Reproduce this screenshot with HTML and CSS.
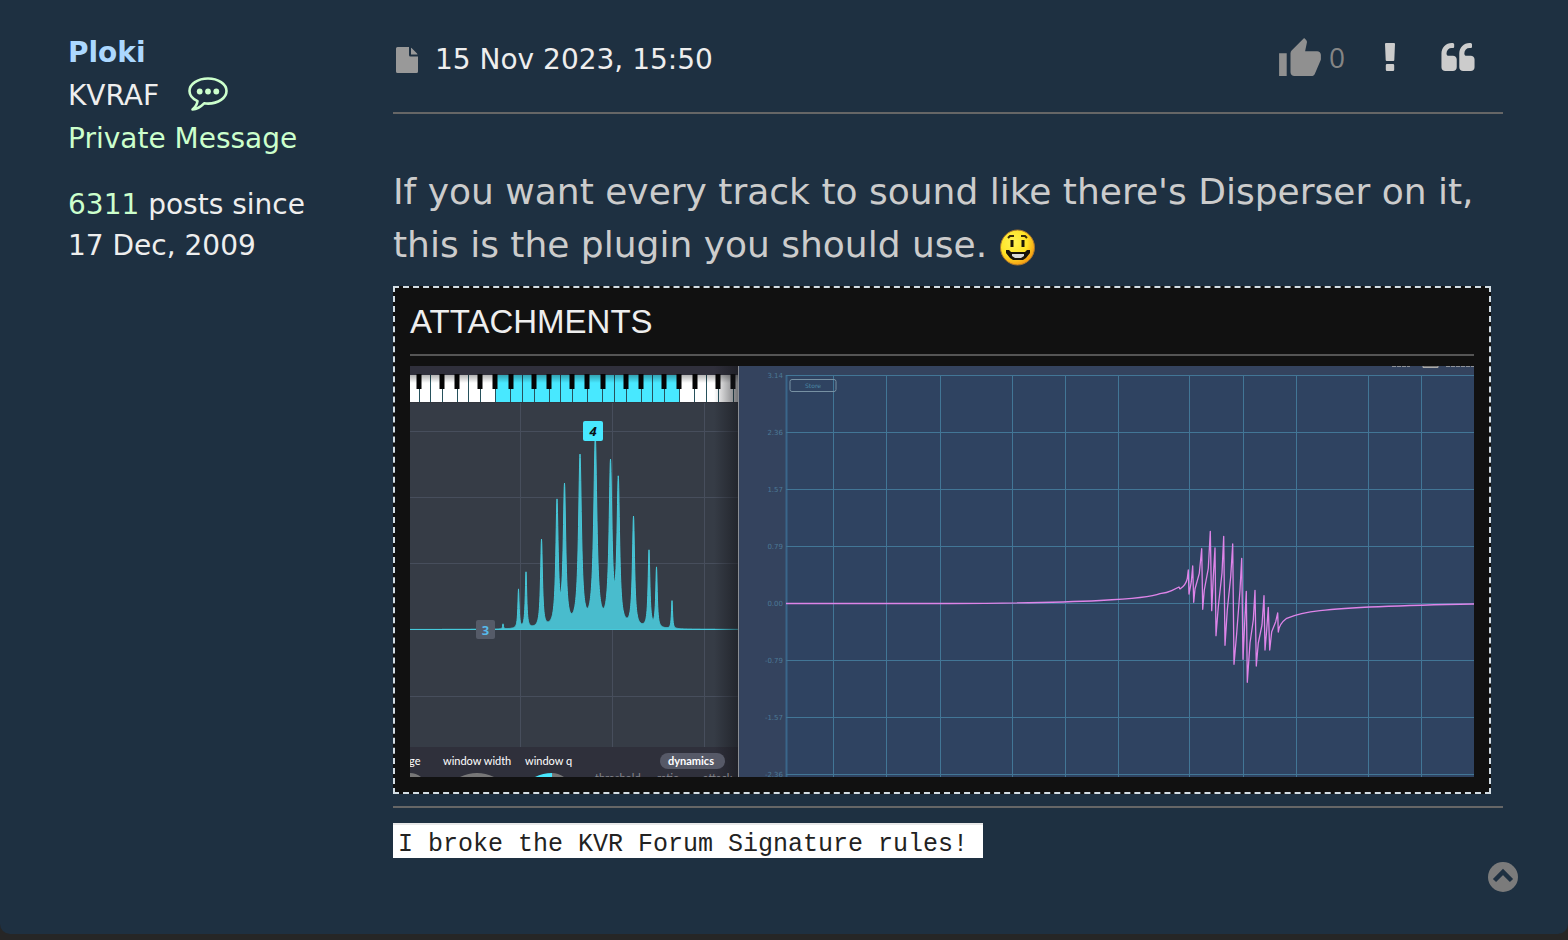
FILE: index.html
```html
<!DOCTYPE html>
<html lang="en">
<head>
    <meta charset="UTF-8">
    <meta name="viewport" content="width=device-width, initial-scale=1.0">
    <title>KVR Forum</title>
    <link rel="stylesheet" href="styles.css">
</head>
<body>

<article class="post">
    <aside class="profile">
        <a class="username" href="#">Ploki</a>
        <div class="rank">KVRAF
            <a class="chat" href="#" aria-label="Send message">
                <svg width="40" height="34" viewBox="0 0 40 34">
                    <path d="M9.5 24.2C4 21.5 1.5 18 1.5 14 1.5 7 9.8 1.5 20 1.5S38.5 7 38.5 14 30.2 26.6 20 26.6c-1.4 0-2.6-.1-3.9-.3C12.5 30 8 32.2 4.5 32.5 7 30.5 9 28 9.5 24.2z" fill="none" stroke="currentColor" stroke-width="2.6" stroke-linejoin="round"/>
                    <circle cx="11.7" cy="14.5" r="2.9" fill="currentColor"/>
                    <circle cx="20" cy="14.5" r="2.9" fill="currentColor"/>
                    <circle cx="28.3" cy="14.5" r="2.9" fill="currentColor"/>
                </svg>
            </a>
        </div>
        <a class="pm" href="#">Private Message</a>
        <div class="stats"><a href="#">6311</a> posts since<br>17 Dec, 2009</div>
    </aside>

    <div class="content">
        <header class="post-header">
            <a class="permalink" href="#" aria-label="Post">
                <svg width="22" height="26" viewBox="0 0 22 26">
                    <path d="M1.5 0H13v8q0 1.500 1.500 1.500H22V24.500q0 1.500-1.500 1.500h-19Q0 26 0 24.500v-23Q0 0 1.500 0zM15 .7q.5.3.8.600l5 5q.4.400.7 1.200H15z" fill="#999"/>
                </svg>
            </a>
            <time class="date">15 Nov 2023, 15:50</time>
            <button class="like" aria-label="Like">
                <svg width="42" height="38" viewBox="1 1 22 20">
                    <path d="M1 21h4V9H1v12zm22-11c0-1.100-.9-2-2-2h-6.310l.95-4.570.03-.32c0-.41-.17-.79-.44-1.060L14.170 1 7.590 7.590C7.220 7.950 7 8.450 7 9v10c0 1.100.9 2 2 2h9c.83 0 1.540-.5 1.840-1.220l3.020-7.050c.09-.23.14-.47.14-.73v-2z" fill="#909090"/>
                </svg>
                <span class="count">0</span>
            </button>
            <button class="report" aria-label="Report">
                <svg width="10" height="28" viewBox="0 0 10 28">
                    <path d="M1 0h8q1 0 1 1l-.7 16q0 1-1 1H1.700q-1 0-1-1L0 1q0-1 1-1zM2 21h6q1.200 0 1.200 1.200v4.600Q9.200 28 8 28H2Q.8 28 .8 26.800v-4.600Q.8 21 2 21z" fill="#ccc"/>
                </svg>
            </button>
            <button class="quote" aria-label="Quote">
                <svg width="34" height="28" viewBox="0 128 1664 1408">
                    <path id="mark" d="M768 960v384q0 80-56 136t-136 56H192q-80 0-136-56T0 1344V640q0-104 40.500-198.500T150 278 313.500 168.500 512 128h64q26 0 45 19t19 45v128q0 26-19 45t-45 19h-64q-106 0-181 75t-75 181v32q0 40 28 68t68 28h224q80 0 136 56t56 136z" fill="#ccc"/>
                    <use href="#mark" x="896"/>
                </svg>
            </button>
        </header>

        <p class="message">If you want every track to sound like there's Disperser on it,<br>this is the plugin you should use.
            <svg class="smiley" width="37" height="37" viewBox="0 0 37 37" role="img" aria-label="grin">
                <defs>
                    <radialGradient id="face" cx=".38" cy=".35" r=".68">
                        <stop offset="0" stop-color="#fff352"/>
                        <stop offset=".6" stop-color="#ffe326"/>
                        <stop offset="1" stop-color="#f59a12"/>
                    </radialGradient>
                </defs>
                <ellipse cx="18.500" cy="18.500" rx="17" ry="17.500" fill="url(#face)" stroke="#a8762c" stroke-width="1"/>
                <path d="M9 9l2-2h4M22 7h4l2 2" fill="none" stroke="#3a2c08" stroke-width="2"/>
                <path d="M13 11v7M24 11v7" stroke="#1c1606" stroke-width="3"/>
                <path d="M7 21h3l2 2h14l2-2h3v3l-4 5-3 2H14l-3-2-4-5z" fill="#18130a"/>
                <path d="M13 25h12v2l-3 2h-6l-3-2z" fill="#d8d8d8"/>
            </svg>
        </p>

        <section class="attachments">
            <h2>ATTACHMENTS</h2>
            <svg class="shot" viewBox="0 0 1064 411" role="img" aria-label="EQ and phase plot">
                <defs>
                    <linearGradient id="edge">
                        <stop offset="0" stop-color="#16171c" stop-opacity="0"/>
                        <stop offset="1" stop-color="#16171c" stop-opacity=".6"/>
                    </linearGradient>
                    <linearGradient id="shade" x2="0" y2="1">
                        <stop offset="0" stop-color="#000" stop-opacity=".3"/>
                        <stop offset="1" stop-color="#000" stop-opacity="0"/>
                    </linearGradient>
                </defs>

                <!-- equaliser -->
                <rect width="328" height="411" fill="#363c46"/>
                <rect width="328" height="9" fill="#30303c"/>
                <rect y="381" width="328" height="30" fill="#2f303b"/>
                <path d="M110.500 37v344M202.500 37v344M294.500 37v344M0 65.500h328M0 131.500h328M0 197.500h328M0 330.500h328" stroke="#474e5c" fill="none"/>
                <rect y="9" width="328" height="27" fill="#fff"/>
                <rect x="85" y="9" width="184" height="27" fill="#48e8ff"/>
                <g id="keys"></g>
                <rect y="9" width="328" height="8" fill="url(#shade)"/>
                <path d="M0 36.500h328" stroke="#33363e"/>
                <path id="spectrum" fill="#49bccd" stroke="#46c9da" stroke-linejoin="round"/>
                <rect x="173" y="55" width="20" height="20" rx="2" fill="#48e8ff"/>
                <text class="badge slanted" x="183" y="70" fill="#0a1216">4</text>
                <rect x="66" y="254" width="19" height="19" rx="2" fill="#555b68"/>
                <text class="badge" x="75.500" y="269" fill="#57b9ea">3</text>
                <rect x="304" width="24" height="411" fill="url(#edge)"/>

                <text class="knob" x="-1" y="399">ge</text>
                <text class="knob" x="33" y="399">window width</text>
                <text class="knob" x="115" y="399">window q</text>
                <rect x="250" y="387" width="65" height="16" rx="8" fill="#565967"/>
                <text class="knob strong" x="258" y="399">dynamics</text>
                <path d="M0 407q6 0 11 4H0zM50 411q17-8 34 0zM142 407q6 0 12 4h-12z" fill="#777"/>
                <path d="M125 411q8-4 17-4v4z" fill="#48e8ff"/>
                <g class="cut">
                    <text x="185" y="416">threshold</text>
                    <text x="247" y="416">ratio</text>
                    <text x="293" y="416">attack</text>
                </g>

                <!-- phase plot -->
                <rect x="328" width="736" height="411" fill="#34435e"/>
                <rect x="376" y="9" width="688" height="402" fill="#2f4361"/>
                <path d="M328.500 0v411" stroke="#8b8e94"/>
                <path d="M376.500 9v402" stroke="#3a668a" stroke-width="2"/>
                <path d="M423.500 9v402M476.500 9v402M530.500 9v402M602.500 9v402M655.500 9v402M708.500 9v402M779.500 9v402M833.500 9v402M886.500 9v402M958.500 9v402M1011.500 9v402M376 9.500h688M376 66.500h688M376 123.500h688M376 180.500h688M376 237.500h688M376 294.500h688M376 351.500h688M376 408.500h688" stroke="#427696" fill="none"/>
                <g class="axis">
                    <text x="373" y="12">3.14</text>
                    <text x="373" y="69">2.36</text>
                    <text x="373" y="126">1.57</text>
                    <text x="373" y="183">0.79</text>
                    <text x="373" y="240">0.00</text>
                    <text x="373" y="297">-0.79</text>
                    <text x="373" y="354">-1.57</text>
                    <text x="373" y="411">-2.36</text>
                </g>
                <rect x="380" y="13.500" width="46" height="12" rx="2" fill="none" stroke="#7791a3"/>
                <text class="store" x="403" y="22">Store</text>
                <path d="M982 .5h18M1036 .5h28" stroke="#8e939b" stroke-dasharray="4 1"/>
                <path d="M1013 0v1.500h15V0" fill="#777" stroke="#aaa"/>
                <path d="M376 237.500H540Q640 237 690 234.500T750 227.700Q757 227 761.700 224.700L769 221L770 223Q776 219 777.300 212.300L778.300 204L779 228Q781 218 781.300 215.700L782.700 200L783.700 236.300L785 223L789.300 207.300L791.700 182.700L792.700 243.300L794.300 224L798.300 202.300L800.300 165.300L801.700 244.700L803.300 210.700L805 182L806 269.700L808.300 240.700L812 207L813.700 170.300L815 279.300L817.300 244L820.700 210.700L822.700 178L824 298.300L826.700 267.300L830 224L831.700 192.300L833 293.300L834.700 257L836.300 225.300L837.300 316.300L840 277L843.300 254L845 224.300L846.300 300L848.300 277L852 259L854 229.700L855 284L856.700 264L858.300 241.300L859.700 284L861.700 265.700L865.700 255.700L867.700 247L868.300 266Q869 258 876.700 252.300Q890 247 910 244.700Q950 240 1064 238" fill="none" stroke="#de84e8" stroke-width="1.300" stroke-linejoin="round"/>
            </svg>
        </section>

        <footer class="signature">
            <div class="banner">I broke the KVR Forum Signature rules!</div>
        </footer>
    </div>

    <a class="top" href="#" aria-label="Top">
        <svg width="30" height="30" viewBox="0 0 30 30">
            <circle cx="15" cy="15" r="15" fill="#7b7b7b"/>
            <path d="M6.500 18.500l8.500-8.500 8.500 8.500" fill="none" stroke="#1e3041" stroke-width="4.500"/>
        </svg>
    </a>
</article>

<script src="script.js"></script>
</body>
</html>
```
FILE: styles.css
```css
* {
    box-sizing: border-box;
}

body {
    margin: 0;
    background: #262626;
    color: #eee;
    font-family: Verdana, "DejaVu Sans", sans-serif;
    font-size: 28px;
}

a {
    color: #cfc;
    text-decoration: none;
}

button {
    display: flex;
    align-items: center;
    padding: 0;
    border: 0;
    background: none;
    cursor: pointer;
}

svg {
    display: block;
}

.post {
    display: grid;
    grid-template-columns: 325px 1fr;
    align-content: start;
    min-height: calc(100vh - 6px);
    padding: 31px 50px 42px 68px;
    background: #1e3041;
    border-radius: 0 0 10px 10px;
}

.profile {
    line-height: 43px;
}

.username {
    display: block;
    color: #acd8ff;
    font-weight: bold;
}

.rank {
    display: flex;
    align-items: center;
    gap: 29px;
    height: 43px;
}

.chat {
    padding-bottom: 4px;
}

.pm {
    display: block;
}

.stats {
    margin-top: 24px;
    line-height: 41px;
}

.content {
    min-width: 0;
    margin-right: 15px;
}

.post-header {
    display: flex;
    align-items: center;
    padding: 0 28px 23px 3px;
    border-bottom: 2px solid #666;
    line-height: 58px;
}

.post-header button {
    padding-bottom: 6px;
}

.date {
    margin-left: 17px;
    margin-right: auto;
}

.like {
    gap: 8px;
}

.count {
    color: #858585;
    font-family: "Open Sans", sans-serif;
    font-size: 28px;
    line-height: 38px;
}

.report {
    margin-left: 40px;
}

.quote {
    margin-left: 46px;
}

.message {
    margin: 51px 0 15px;
    color: #ccc;
    font-size: 36px;
    line-height: 53px;
}

.smiley {
    display: inline-block;
    vertical-align: -9px;
}

.attachments {
    margin-right: 12px;
    padding: 13px 15px 15px;
    border: 2px dashed #d3dde4;
    background: #111;
}

.attachments h2 {
    margin: 0 0 10px;
    padding-bottom: 11px;
    border-bottom: 2px solid #555;
    font: 33px/42px Arial, "Liberation Sans", sans-serif;
}

.shot {
    width: 100%;
    height: auto;
}

.badge {
    font: bold 13px "Open Sans", sans-serif;
    text-anchor: middle;
}

.slanted {
    font-style: italic;
}

.knob {
    fill: #fff;
    font: 11px Lato, sans-serif;
}

.strong {
    font-weight: bold;
}

.cut {
    fill: #85868d;
    font: 11px Lato, sans-serif;
}

.axis {
    fill: #4c7997;
    font: 7px "DejaVu Sans", sans-serif;
    text-anchor: end;
}

.store {
    fill: #4b87a5;
    font: 6px "DejaVu Sans", sans-serif;
    text-anchor: middle;
}

.signature {
    margin-top: 12px;
    padding-top: 15px;
    border-top: 2px solid #666;
}

.banner {
    width: 590px;
    max-width: 100%;
    padding: 6px 5px 0;
    border-top: 2px solid #e8e8e8;
    background: #fff;
    color: #222;
    font: 25px/27px "Liberation Mono", monospace;
    white-space: nowrap;
}

.top {
    grid-column: 2;
    justify-self: end;
    margin-top: 4px;
}
```
FILE: script.js
```js
const svgNS = 'http://www.w3.org/2000/svg';
const keys = document.getElementById('keys');

function addKey(x, y, width, height, color) {
    const rect = document.createElementNS(svgNS, 'rect');
    rect.setAttribute('x', x);
    rect.setAttribute('y', y);
    rect.setAttribute('width', width);
    rect.setAttribute('height', height);
    rect.setAttribute('fill', color);
    keys.appendChild(rect);
}

// gaps between white keys, then the black keys
[9, 20, 32, 47, 58, 70, 85, 100, 112, 124, 139, 150, 162, 177, 192, 204, 216, 231, 242, 254, 269, 284, 296, 308, 323]
    .forEach(x => addKey(x, 9, 1, 28, '#27515c'));
[9, 32, 47, 70, 85, 101, 124, 139, 162, 177, 193, 216, 231, 254, 269, 285, 308, 323]
    .forEach(x => addKey(x - 2.5, 8, 5, 15, '#050505'));

// resonance peaks: position and height
const peaks = [
    [93, 5], [108.5, 39], [116, 56], [131.5, 88], [147, 123], [154.5, 139], [170, 170],
    [185.3, 188], [200.5, 161], [208.3, 144], [223.5, 110], [239, 77], [246.5, 60], [262, 28]
];

const base = 263.5;
let path = 'M0 ' + base;
for (let x = 0; x <= 328; x += 0.25) {
    let level = 0;
    for (const [px, height] of peaks) {
        const w = 0.45 + height * 0.0076;
        level += height / (1 + ((x - px) / w) ** 2);
    }
    path += 'L' + x + ' ' + (base - level).toFixed(1);
}
document.getElementById('spectrum').setAttribute('d', path + 'V' + base + 'Z');
```
